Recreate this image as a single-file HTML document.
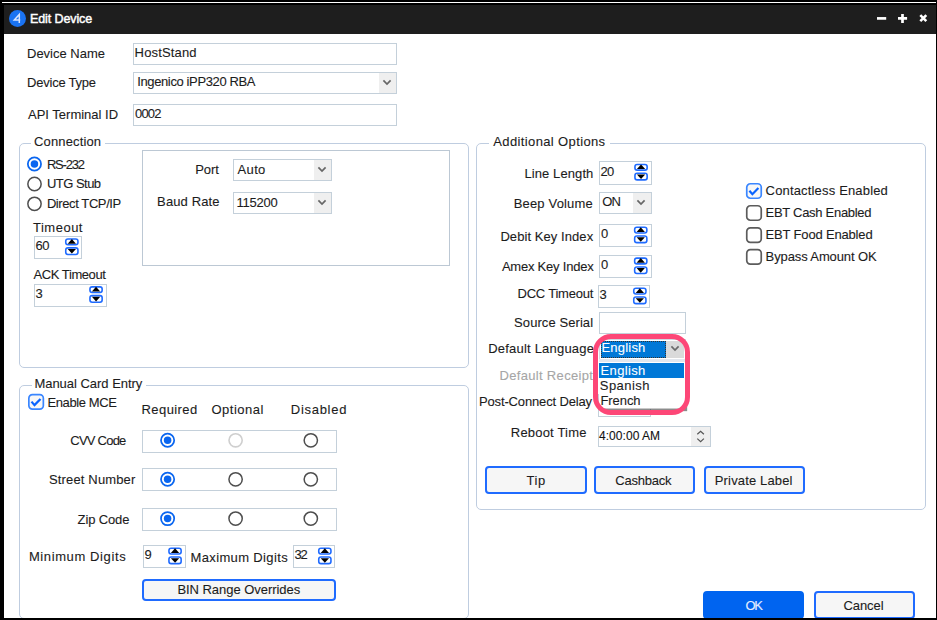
<!DOCTYPE html>
<html><head><meta charset="utf-8">
<style>
*{box-sizing:border-box;margin:0;padding:0}
html,body{width:937px;height:620px;overflow:hidden;background:#000}
body{position:relative;font-family:"Liberation Sans",sans-serif;font-size:13px;color:#1c1c1c}
.a{position:absolute}
.t{position:absolute;white-space:nowrap;line-height:15px;height:15px;-webkit-text-stroke:0.1px currentColor}
.tb{position:absolute;border:1px solid #c4d0da;background:#fff}
.dd{position:absolute;background:#efefef}
.chev{position:absolute}
.grp{position:absolute;border:1px solid #bfcde0;border-radius:5px}
.gap{position:absolute;background:#fff;height:3px}
.rad{position:absolute;width:14px;height:14px;border-radius:50%;border:1.6px solid #3c3c3c;background:#fff}
.rad.on{border-color:#1a6cff}
.rad.on::after{content:"";position:absolute;left:1.9px;top:1.9px;width:7px;height:7px;border-radius:50%;background:#1a6cff}
.rad.dis{border-color:#cccccc}
.cb{position:absolute;width:15px;height:15px;border-radius:3px;border:1.5px solid #555;background:#fff}
.cb.on{border-color:#3b82ff}
.sp{position:absolute;width:14px;height:8px;border:1.6px solid #2b72ff;border-radius:2.5px;background:#fff}
.sp svg{position:absolute;left:0;top:0}
.btn{position:absolute;border:2px solid #1f6bff;border-radius:4px;background:#f6f6f6}
</style></head>
<body>
<!-- frame -->
<div class="a" style="left:2px;top:2px;width:934px;height:1px;background:#fff"></div>
<div class="a" style="left:4px;top:5px;width:932px;height:29px;background:#1e1e1e"></div>
<div class="a" style="left:4px;top:34px;width:932px;height:584px;background:#fff"></div>

<!-- title -->
<div class="a" style="left:8.8px;top:9.7px;width:17.2px;height:17.2px;border-radius:50%;background:#1a73f2"></div>
<svg class="a" style="left:0;top:0" width="40" height="34"><path d="M19.3 23 V14.4 L14.3 19.9 H20.2" fill="none" stroke="#d6e4ff" stroke-width="1.5" stroke-linejoin="miter"/></svg>
<svg class="a" style="left:860px;top:5px" width="76" height="29">
<path d="M17 13.4 H26.2" stroke="#fff" stroke-width="2.7"/>
<path d="M38 13.4 H47.1 M42.5 8.9 V18" stroke="#fff" stroke-width="2.7"/>
<path d="M60.3 10.2 L66.3 16.2 M66.3 10.2 L60.3 16.2" stroke="#fff" stroke-width="2.6"/>
</svg>

<!-- top fields -->
<div class="tb" style="left:133px;top:43px;width:264px;height:22px"></div>
<div class="tb" style="left:133px;top:72px;width:264px;height:22px"><div class="dd" style="left:245px;top:0;width:17px;height:20px"></div></div>
<svg class="a chev" style="left:381.8px;top:79px" width="10" height="7"><path d="M1.4 1.4 L5 5 L8.6 1.4" fill="none" stroke="#666" stroke-width="1.7"/></svg>
<div class="tb" style="left:133px;top:104px;width:264px;height:22px"></div>

<!-- connection group -->
<div class="grp" style="left:19px;top:143px;width:450px;height:225px"></div>
<div class="gap" style="left:31px;top:142px;width:74px"></div>
<div class="tb" style="left:34px;top:236px;width:48px;height:23px"></div>
<div class="tb" style="left:34px;top:284px;width:73px;height:23px"></div>

<div class="a" style="left:142px;top:150px;width:308px;height:116px;border:1px solid #bcc8d4"></div>
<div class="tb" style="left:233px;top:159px;width:99px;height:22px"><div class="dd" style="left:80px;top:0;width:17px;height:20px"></div></div>
<svg class="a chev" style="left:316.8px;top:166.3px" width="10" height="7"><path d="M1.4 1.4 L5 5 L8.6 1.4" fill="none" stroke="#666" stroke-width="1.7"/></svg>
<div class="tb" style="left:233px;top:192px;width:99px;height:22px"><div class="dd" style="left:80px;top:0;width:17px;height:20px"></div></div>
<svg class="a chev" style="left:316.8px;top:199.2px" width="10" height="7"><path d="M1.4 1.4 L5 5 L8.6 1.4" fill="none" stroke="#666" stroke-width="1.7"/></svg>

<!-- manual card entry -->
<div class="grp" style="left:19px;top:385px;width:450px;height:234px"></div>
<div class="gap" style="left:31.5px;top:384px;width:114px"></div>
<div class="tb" style="left:142px;top:430px;width:195px;height:23px"></div>
<div class="tb" style="left:142px;top:468px;width:195px;height:23px"></div>
<div class="tb" style="left:142px;top:508px;width:195px;height:23px"></div>
<div class="tb" style="left:143px;top:545px;width:43px;height:23px"></div>
<div class="tb" style="left:293px;top:545px;width:42px;height:23px"></div>
<div class="btn" style="left:142px;top:578.5px;width:194px;height:22.5px"></div>

<!-- additional options -->
<div class="grp" style="left:476px;top:143px;width:450px;height:367px"></div>
<div class="gap" style="left:489px;top:142px;width:121px"></div>

<div class="tb" style="left:599px;top:161px;width:52.5px;height:24px"></div>
<div class="tb" style="left:599px;top:192px;width:52.5px;height:22px"><div class="dd" style="left:33px;top:0;width:17.5px;height:20px"></div></div>
<svg class="a chev" style="left:636.2px;top:199px" width="10" height="7"><path d="M1.4 1.4 L5 5 L8.6 1.4" fill="none" stroke="#666" stroke-width="1.7"/></svg>
<div class="tb" style="left:599px;top:224.3px;width:52.5px;height:22.5px"></div>
<div class="tb" style="left:599px;top:255px;width:52.5px;height:22.5px"></div>
<div class="tb" style="left:598px;top:285px;width:52.3px;height:22.5px"></div>
<div class="tb" style="left:599px;top:312px;width:86.5px;height:22px"></div>
<!-- post connect delay (hidden behind) -->
<div class="tb" style="left:598px;top:394px;width:52.5px;height:23px"></div>
<!-- reboot time -->
<div class="tb" style="left:598px;top:425.7px;width:112.7px;height:21px"><div class="dd" style="left:92.3px;top:0;width:18.4px;height:19px"></div></div>
<svg class="a" style="left:690px;top:426px" width="21" height="21"><path d="M7.3 8.3 L10.6 5.3 L13.9 8.3 M7.3 12.6 L10.6 15.6 L13.9 12.6" fill="none" stroke="#555" stroke-width="1.2"/></svg>

<!-- buttons -->
<div class="btn" style="left:485.4px;top:466.2px;width:101.2px;height:28px"></div>
<div class="btn" style="left:594.4px;top:466.2px;width:101px;height:28px"></div>
<div class="btn" style="left:703.5px;top:466.2px;width:101px;height:28px"></div>
<div class="btn" style="left:703.4px;top:591.4px;width:101.1px;height:28px;background:#0064f0;border-color:#0064f0"></div>
<div class="btn" style="left:814px;top:591.4px;width:100.6px;height:28px"></div>
<svg class="a" style="left:25px;top:155px" width="19" height="19"><circle cx="9.45" cy="9.05" r="6.6" fill="#fff" stroke="#0a66f0" stroke-width="1.75"/><circle cx="9.45" cy="9.05" r="3.75" fill="#0a66f0"/></svg>
<svg class="a" style="left:25px;top:175px" width="19" height="19"><circle cx="9.50" cy="9.00" r="6.65" fill="#fff" stroke="#4e4e4e" stroke-width="1.5"/></svg>
<svg class="a" style="left:25px;top:194px" width="19" height="19"><circle cx="9.50" cy="9.80" r="6.65" fill="#fff" stroke="#4e4e4e" stroke-width="1.5"/></svg>
<svg class="a" style="left:158px;top:431px" width="19" height="19"><circle cx="9.60" cy="9.30" r="6.6" fill="#fff" stroke="#0a66f0" stroke-width="1.75"/><circle cx="9.60" cy="9.30" r="3.75" fill="#0a66f0"/></svg>
<svg class="a" style="left:226px;top:431px" width="19" height="19"><circle cx="9.60" cy="9.30" r="6.6" fill="#fff" stroke="#cfcfcf" stroke-width="1.6"/></svg>
<svg class="a" style="left:301px;top:431px" width="19" height="19"><circle cx="9.80" cy="9.30" r="6.65" fill="#fff" stroke="#4e4e4e" stroke-width="1.5"/></svg>
<svg class="a" style="left:158px;top:470px" width="19" height="19"><circle cx="9.60" cy="9.30" r="6.6" fill="#fff" stroke="#0a66f0" stroke-width="1.75"/><circle cx="9.60" cy="9.30" r="3.75" fill="#0a66f0"/></svg>
<svg class="a" style="left:226px;top:470px" width="19" height="19"><circle cx="9.60" cy="9.30" r="6.65" fill="#fff" stroke="#4e4e4e" stroke-width="1.5"/></svg>
<svg class="a" style="left:301px;top:470px" width="19" height="19"><circle cx="9.80" cy="9.30" r="6.65" fill="#fff" stroke="#4e4e4e" stroke-width="1.5"/></svg>
<svg class="a" style="left:158px;top:509px" width="19" height="19"><circle cx="9.60" cy="9.60" r="6.6" fill="#fff" stroke="#0a66f0" stroke-width="1.75"/><circle cx="9.60" cy="9.60" r="3.75" fill="#0a66f0"/></svg>
<svg class="a" style="left:226px;top:509px" width="19" height="19"><circle cx="9.60" cy="9.60" r="6.65" fill="#fff" stroke="#4e4e4e" stroke-width="1.5"/></svg>
<svg class="a" style="left:301px;top:509px" width="19" height="19"><circle cx="9.80" cy="9.60" r="6.65" fill="#fff" stroke="#4e4e4e" stroke-width="1.5"/></svg>
<svg class="a" style="left:27px;top:392px" width="19" height="19"><g transform="translate(0.10,0.90)"><rect x="1.75" y="1.75" width="14.5" height="14.5" rx="3.6" fill="#f7f7f7" stroke="#3a86ff" stroke-width="1.7"/><path d="M4.4 8.7 L7.4 12.2 L13.4 6" fill="none" stroke="#0a64ff" stroke-width="2.2"/></g></svg>
<svg class="a" style="left:745px;top:182px" width="19" height="19"><g transform="translate(0.00,0.00)"><rect x="1.75" y="1.75" width="14.5" height="14.5" rx="3.6" fill="#f7f7f7" stroke="#3a86ff" stroke-width="1.7"/><path d="M4.4 8.7 L7.4 12.2 L13.4 6" fill="none" stroke="#0a64ff" stroke-width="2.2"/></g></svg>
<svg class="a" style="left:745px;top:204px" width="19" height="19"><g transform="translate(0.00,0.00)"><rect x="1.75" y="1.75" width="14.5" height="14.5" rx="3.6" fill="#fff" stroke="#5c5c5c" stroke-width="1.7"/></g></svg>
<svg class="a" style="left:745px;top:226px" width="19" height="19"><g transform="translate(0.00,0.10)"><rect x="1.75" y="1.75" width="14.5" height="14.5" rx="3.6" fill="#fff" stroke="#5c5c5c" stroke-width="1.7"/></g></svg>
<svg class="a" style="left:745px;top:247px" width="19" height="19"><g transform="translate(0.00,0.90)"><rect x="1.75" y="1.75" width="14.5" height="14.5" rx="3.6" fill="#fff" stroke="#5c5c5c" stroke-width="1.7"/></g></svg>
<svg class="a" style="left:64px;top:237px" width="17" height="21"><g transform="translate(0.00,0.00)"><rect x="1.75" y="2.05" width="12.2" height="5.7" rx="2.2" fill="#fff" stroke="#1f6bff" stroke-width="1.6"/><rect x="1.75" y="10.85" width="12.2" height="6.6" rx="2.2" fill="#fff" stroke="#1f6bff" stroke-width="1.6"/><path d="M3.7 6.7 L7.85 2.0 L12 6.7Z" fill="#000"/><path d="M3.7 12.0 L12 12.0 L7.85 16.6Z" fill="#000"/></g></svg>
<svg class="a" style="left:88px;top:284px" width="17" height="21"><g transform="translate(0.20,0.80)"><rect x="1.75" y="2.05" width="12.2" height="5.7" rx="2.2" fill="#fff" stroke="#1f6bff" stroke-width="1.6"/><rect x="1.75" y="10.85" width="12.2" height="6.6" rx="2.2" fill="#fff" stroke="#1f6bff" stroke-width="1.6"/><path d="M3.7 6.7 L7.85 2.0 L12 6.7Z" fill="#000"/><path d="M3.7 12.0 L12 12.0 L7.85 16.6Z" fill="#000"/></g></svg>
<svg class="a" style="left:167px;top:546px" width="17" height="21"><g transform="translate(0.20,0.20)"><rect x="1.75" y="2.05" width="12.2" height="5.7" rx="2.2" fill="#fff" stroke="#1f6bff" stroke-width="1.6"/><rect x="1.75" y="10.85" width="12.2" height="6.6" rx="2.2" fill="#fff" stroke="#1f6bff" stroke-width="1.6"/><path d="M3.7 6.7 L7.85 2.0 L12 6.7Z" fill="#000"/><path d="M3.7 12.0 L12 12.0 L7.85 16.6Z" fill="#000"/></g></svg>
<svg class="a" style="left:317px;top:546px" width="17" height="21"><g transform="translate(0.00,0.20)"><rect x="1.75" y="2.05" width="12.2" height="5.7" rx="2.2" fill="#fff" stroke="#1f6bff" stroke-width="1.6"/><rect x="1.75" y="10.85" width="12.2" height="6.6" rx="2.2" fill="#fff" stroke="#1f6bff" stroke-width="1.6"/><path d="M3.7 6.7 L7.85 2.0 L12 6.7Z" fill="#000"/><path d="M3.7 12.0 L12 12.0 L7.85 16.6Z" fill="#000"/></g></svg>
<svg class="a" style="left:633px;top:162px" width="17" height="21"><g transform="translate(0.20,0.40)"><rect x="1.75" y="2.05" width="12.2" height="5.7" rx="2.2" fill="#fff" stroke="#1f6bff" stroke-width="1.6"/><rect x="1.75" y="10.85" width="12.2" height="6.6" rx="2.2" fill="#fff" stroke="#1f6bff" stroke-width="1.6"/><path d="M3.7 6.7 L7.85 2.0 L12 6.7Z" fill="#000"/><path d="M3.7 12.0 L12 12.0 L7.85 16.6Z" fill="#000"/></g></svg>
<svg class="a" style="left:632px;top:225px" width="17" height="21"><g transform="translate(0.90,0.20)"><rect x="1.75" y="2.05" width="12.2" height="5.7" rx="2.2" fill="#fff" stroke="#1f6bff" stroke-width="1.6"/><rect x="1.75" y="10.85" width="12.2" height="6.6" rx="2.2" fill="#fff" stroke="#1f6bff" stroke-width="1.6"/><path d="M3.7 6.7 L7.85 2.0 L12 6.7Z" fill="#000"/><path d="M3.7 12.0 L12 12.0 L7.85 16.6Z" fill="#000"/></g></svg>
<svg class="a" style="left:632px;top:256px" width="17" height="21"><g transform="translate(0.90,0.10)"><rect x="1.75" y="2.05" width="12.2" height="5.7" rx="2.2" fill="#fff" stroke="#1f6bff" stroke-width="1.6"/><rect x="1.75" y="10.85" width="12.2" height="6.6" rx="2.2" fill="#fff" stroke="#1f6bff" stroke-width="1.6"/><path d="M3.7 6.7 L7.85 2.0 L12 6.7Z" fill="#000"/><path d="M3.7 12.0 L12 12.0 L7.85 16.6Z" fill="#000"/></g></svg>
<svg class="a" style="left:632px;top:286px" width="17" height="21"><g transform="translate(0.00,0.20)"><rect x="1.75" y="2.05" width="12.2" height="5.7" rx="2.2" fill="#fff" stroke="#1f6bff" stroke-width="1.6"/><rect x="1.75" y="10.85" width="12.2" height="6.6" rx="2.2" fill="#fff" stroke="#1f6bff" stroke-width="1.6"/><path d="M3.7 6.7 L7.85 2.0 L12 6.7Z" fill="#000"/><path d="M3.7 12.0 L12 12.0 L7.85 16.6Z" fill="#000"/></g></svg>
<div class="t" style="left:29.90px;top:12px;color:#ffffff;font-size:12.5px;font-weight:normal;letter-spacing:-0.09px;-webkit-text-stroke:0.45px #fff">Edit Device</div>
<div class="t" style="left:27.00px;top:46px;color:#1c1c1c;font-size:13px;font-weight:normal;letter-spacing:0.0px;">Device Name</div>
<div class="t" style="left:27.00px;top:75px;color:#1c1c1c;font-size:13px;font-weight:normal;letter-spacing:-0.22px;">Device Type</div>
<div class="t" style="left:28.00px;top:107px;color:#1c1c1c;font-size:13px;font-weight:normal;letter-spacing:0.0px;">API Terminal ID</div>
<div class="t" style="left:134.60px;top:45px;color:#1c1c1c;font-size:13px;font-weight:normal;letter-spacing:0.15px;">HostStand</div>
<div class="t" style="left:137.20px;top:74px;color:#1c1c1c;font-size:13px;font-weight:normal;letter-spacing:-0.372px;">Ingenico iPP320 RBA</div>
<div class="t" style="left:135.10px;top:106px;color:#1c1c1c;font-size:13px;font-weight:normal;letter-spacing:-0.867px;">0002</div>
<div class="t" style="left:34.00px;top:134px;color:#1c1c1c;font-size:13px;font-weight:normal;letter-spacing:0.144px;">Connection</div>
<div class="t" style="left:46.90px;top:157px;color:#1c1c1c;font-size:13px;font-weight:normal;letter-spacing:-1.18px;">RS-232</div>
<div class="t" style="left:46.90px;top:176px;color:#1c1c1c;font-size:13px;font-weight:normal;letter-spacing:-0.514px;">UTG Stub</div>
<div class="t" style="left:46.90px;top:196px;color:#1c1c1c;font-size:13px;font-weight:normal;letter-spacing:-0.408px;">Direct TCP/IP</div>
<div class="t" style="left:33.00px;top:220px;color:#1c1c1c;font-size:13px;font-weight:normal;letter-spacing:0.5px;">Timeout</div>
<div class="t" style="left:35.50px;top:238px;color:#1c1c1c;font-size:13px;font-weight:normal;letter-spacing:-0.4px;">60</div>
<div class="t" style="left:33.40px;top:267px;color:#1c1c1c;font-size:13px;font-weight:normal;letter-spacing:-0.41px;">ACK Timeout</div>
<div class="t" style="left:35.50px;top:286px;color:#1c1c1c;font-size:13px;font-weight:normal;letter-spacing:0px;">3</div>
<div class="t" style="left:195.20px;top:162px;color:#1c1c1c;font-size:13px;font-weight:normal;letter-spacing:-0.067px;">Port</div>
<div class="t" style="left:157.10px;top:194px;color:#1c1c1c;font-size:13px;font-weight:normal;letter-spacing:0.113px;">Baud Rate</div>
<div class="t" style="left:237.60px;top:162px;color:#1c1c1c;font-size:13px;font-weight:normal;letter-spacing:0.333px;">Auto</div>
<div class="t" style="left:236.60px;top:195px;color:#1c1c1c;font-size:13px;font-weight:normal;letter-spacing:-0.28px;">115200</div>
<div class="t" style="left:34.40px;top:376px;color:#1c1c1c;font-size:13px;font-weight:normal;letter-spacing:-0.025px;">Manual Card Entry</div>
<div class="t" style="left:47.50px;top:395px;color:#1c1c1c;font-size:13px;font-weight:normal;letter-spacing:-0.389px;">Enable MCE</div>
<div class="t" style="left:141.50px;top:402px;color:#1c1c1c;font-size:13px;font-weight:normal;letter-spacing:0.429px;">Required</div>
<div class="t" style="left:211.50px;top:402px;color:#1c1c1c;font-size:13px;font-weight:normal;letter-spacing:0.5px;">Optional</div>
<div class="t" style="left:290.80px;top:402px;color:#1c1c1c;font-size:13px;font-weight:normal;letter-spacing:0.714px;">Disabled</div>
<div class="t" style="left:70.30px;top:433px;color:#1c1c1c;font-size:13px;font-weight:normal;letter-spacing:-0.771px;">CVV Code</div>
<div class="t" style="left:49.00px;top:472px;color:#1c1c1c;font-size:13px;font-weight:normal;letter-spacing:0.15px;">Street Number</div>
<div class="t" style="left:77.60px;top:512px;color:#1c1c1c;font-size:13px;font-weight:normal;letter-spacing:-0.129px;">Zip Code</div>
<div class="t" style="left:28.90px;top:549px;color:#1c1c1c;font-size:13px;font-weight:normal;letter-spacing:0.608px;">Minimum Digits</div>
<div class="t" style="left:144.50px;top:547px;color:#1c1c1c;font-size:13px;font-weight:normal;letter-spacing:0px;">9</div>
<div class="t" style="left:190.50px;top:550px;color:#1c1c1c;font-size:13px;font-weight:normal;letter-spacing:0.362px;">Maximum Digits</div>
<div class="t" style="left:294.40px;top:547px;color:#1c1c1c;font-size:13px;font-weight:normal;letter-spacing:-1.2px;">32</div>
<div class="t" style="left:177.40px;top:582px;color:#1c1c1c;font-size:13px;font-weight:normal;letter-spacing:-0.039px;">BIN Range Overrides</div>
<div class="t" style="left:493.30px;top:134px;color:#1c1c1c;font-size:13px;font-weight:normal;letter-spacing:0.371px;">Additional Options</div>
<div class="t" style="left:524.40px;top:166px;color:#1c1c1c;font-size:13px;font-weight:normal;letter-spacing:0.1px;">Line Length</div>
<div class="t" style="left:600.60px;top:164px;color:#1c1c1c;font-size:13px;font-weight:normal;letter-spacing:-0.7px;">20</div>
<div class="t" style="left:513.70px;top:196px;color:#1c1c1c;font-size:13px;font-weight:normal;letter-spacing:0.17px;">Beep Volume</div>
<div class="t" style="left:602.20px;top:194px;color:#1c1c1c;font-size:13px;font-weight:normal;letter-spacing:-0.9px;">ON</div>
<div class="t" style="left:500.40px;top:229px;color:#1c1c1c;font-size:13px;font-weight:normal;letter-spacing:0.071px;">Debit Key Index</div>
<div class="t" style="left:601.10px;top:226px;color:#1c1c1c;font-size:13px;font-weight:normal;letter-spacing:0px;">0</div>
<div class="t" style="left:501.90px;top:259px;color:#1c1c1c;font-size:13px;font-weight:normal;letter-spacing:-0.223px;">Amex Key Index</div>
<div class="t" style="left:601.10px;top:257px;color:#1c1c1c;font-size:13px;font-weight:normal;letter-spacing:0px;">0</div>
<div class="t" style="left:517.50px;top:286px;color:#1c1c1c;font-size:13px;font-weight:normal;letter-spacing:-0.22px;">DCC Timeout</div>
<div class="t" style="left:599.50px;top:287px;color:#1c1c1c;font-size:13px;font-weight:normal;letter-spacing:0px;">3</div>
<div class="t" style="left:514.10px;top:315px;color:#1c1c1c;font-size:13px;font-weight:normal;letter-spacing:0.075px;">Source Serial</div>
<div class="t" style="left:488.20px;top:341px;color:#1c1c1c;font-size:13px;font-weight:normal;letter-spacing:0.207px;">Default Language</div>
<div class="t" style="left:499.50px;top:368px;color:#a6a6a6;font-size:13px;font-weight:normal;letter-spacing:0.321px;">Default Receipt</div>
<div class="t" style="left:479.00px;top:394px;color:#1c1c1c;font-size:13px;font-weight:normal;letter-spacing:-0.147px;">Post-Connect Delay</div>
<div class="t" style="left:510.80px;top:425px;color:#1c1c1c;font-size:13px;font-weight:normal;letter-spacing:0.19px;">Reboot Time</div>
<div class="t" style="left:599.00px;top:429px;color:#111;font-size:12px;font-weight:normal;letter-spacing:0.044px;">4:00:00 AM</div>
<div class="t" style="left:765.60px;top:183px;color:#1c1c1c;font-size:13px;font-weight:normal;letter-spacing:0.167px;">Contactless Enabled</div>
<div class="t" style="left:765.60px;top:205px;color:#1c1c1c;font-size:13px;font-weight:normal;letter-spacing:-0.293px;">EBT Cash Enabled</div>
<div class="t" style="left:765.60px;top:227px;color:#1c1c1c;font-size:13px;font-weight:normal;letter-spacing:-0.173px;">EBT Food Enabled</div>
<div class="t" style="left:765.60px;top:249px;color:#1c1c1c;font-size:13px;font-weight:normal;letter-spacing:-0.113px;">Bypass Amount OK</div>
<div class="t" style="left:526.40px;top:473px;color:#1c1c1c;font-size:13px;font-weight:normal;letter-spacing:0.65px;">Tip</div>
<div class="t" style="left:615.20px;top:473px;color:#1c1c1c;font-size:13px;font-weight:normal;letter-spacing:-0.2px;">Cashback</div>
<div class="t" style="left:714.80px;top:473px;color:#1c1c1c;font-size:13px;font-weight:normal;letter-spacing:0.15px;">Private Label</div>
<div class="t" style="left:745.50px;top:598px;color:#e6eeff;font-size:13px;font-weight:normal;letter-spacing:-1.3px;">OK</div>
<div class="t" style="left:843.40px;top:598px;color:#1c1c1c;font-size:13px;font-weight:normal;letter-spacing:-0.06px;">Cancel</div>

<!-- default language combo -->
<div class="a" style="left:599px;top:339px;width:87px;height:22px;border:1px solid #d0d8e2;background:#fff"></div>
<div class="a" style="left:601px;top:341px;width:65px;height:17px;background:#0078d7;outline:1px dotted #333;outline-offset:-1px"></div>
<div class="a" style="left:666px;top:341px;width:18px;height:17px;background:#dadada"></div>
<svg class="a chev" style="left:670px;top:345px" width="10" height="7"><path d="M1.4 1.4 L5 5 L8.6 1.4" fill="none" stroke="#6a6a6a" stroke-width="1.7"/></svg>
<div class="a" style="left:599px;top:359px;width:86px;height:3px;background:#e2e7ee"></div>
<!-- dropdown list -->
<div class="a" style="left:599px;top:362px;width:86px;height:47px;background:#fff;border-bottom:1px solid #c8c8c8;box-shadow:2px 2px 1px rgba(0,0,0,0.45)"></div>
<div class="a" style="left:599.3px;top:362.8px;width:84.8px;height:15.1px;background:#0078d7"></div>
<div class="t" style="left:601.50px;top:340px;color:#ffffff;font-size:13px;font-weight:normal;letter-spacing:0.2px;">English</div>
<div class="t" style="left:600.50px;top:363px;color:#ffffff;font-size:13px;font-weight:normal;letter-spacing:0.367px;">English</div>
<div class="t" style="left:599.80px;top:378px;color:#1c1c1c;font-size:13px;font-weight:normal;letter-spacing:0.433px;">Spanish</div>
<div class="t" style="left:600.50px;top:393px;color:#1c1c1c;font-size:13px;font-weight:normal;letter-spacing:-0.08px;">French</div>
<!-- pink highlight -->
<div class="a" style="left:593px;top:334px;width:97px;height:81px;border:5px solid #fd4777;border-radius:18px"></div>

<!-- checkboxes -->

<!--TEXTS2-->
<!-- bottom border cover -->
<div class="a" style="left:0;top:618px;width:937px;height:2px;background:#000"></div>
</body></html>
